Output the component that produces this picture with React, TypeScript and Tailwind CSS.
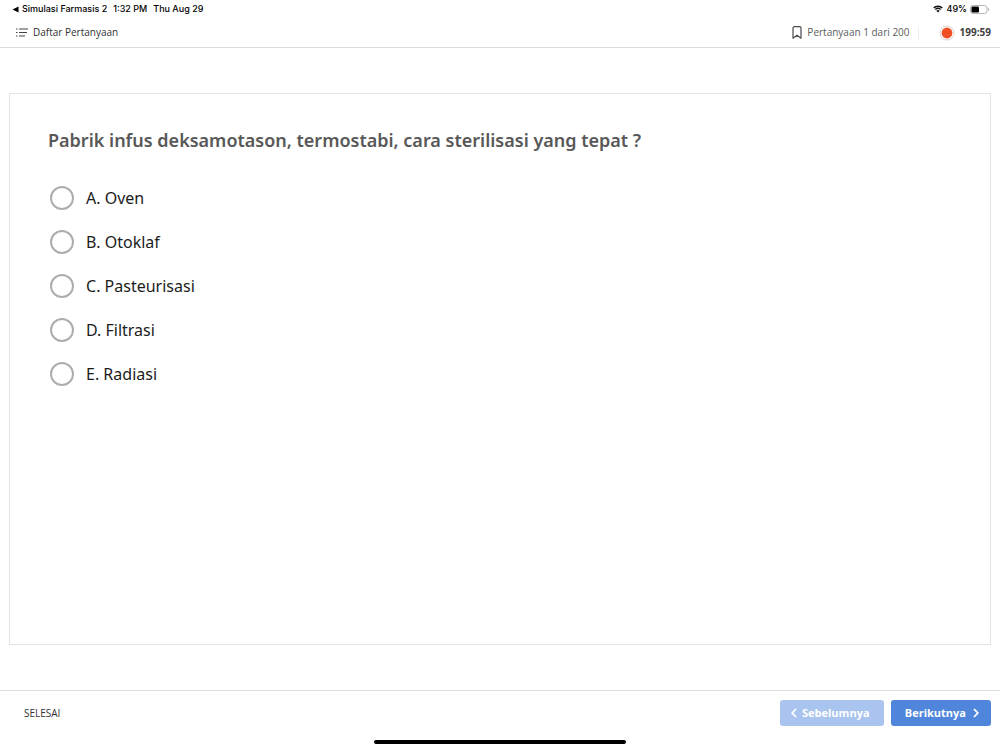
import { useState } from 'react';

const options = [
  { key: 'A', label: 'Oven' },
  { key: 'B', label: 'Otoklaf' },
  { key: 'C', label: 'Pasteurisasi' },
  { key: 'D', label: 'Filtrasi' },
  { key: 'E', label: 'Radiasi' },
];

function WifiIcon() {
  return (
    <svg viewBox="0 0 20 15" className="w-[10px] h-2" aria-hidden="true">
      <path
        d="M1.5 5.2a12.2 12.2 0 0 1 17 0M4.6 8.6a7.8 7.8 0 0 1 10.8 0"
        fill="none"
        stroke="#111"
        strokeWidth="3"
      />
      <path d="M10 14.5 6.6 11a4.8 4.8 0 0 1 6.8 0Z" fill="#111" />
    </svg>
  );
}

function BatteryIcon() {
  return (
    <svg viewBox="0 0 20 9" className="w-5 h-[9px]" aria-hidden="true">
      <rect x="0.5" y="0.5" width="16.5" height="8" rx="2.4" fill="none" stroke="#b5b5b5" />
      <rect x="1.5" y="1.5" width="7.5" height="6" rx="1.2" fill="#000" />
      <path d="M18.2 3v3c.8-.3 1-.9 1-1.5s-.2-1.2-1-1.5Z" fill="#a3a3a3" />
    </svg>
  );
}

function StatusBar() {
  return (
    <div className="flex h-[18px] items-center justify-between pl-3 pr-[10px] font-['Inter',sans-serif] text-[9px] font-medium text-black">
      <div className="flex items-center gap-1.5">
        <span className="flex items-center gap-[3px]">
          <svg viewBox="0 0 7 7" className="w-[7px] h-[7px]" aria-hidden="true">
            <path d="M0.5 3.5 6.5 0.6v5.8Z" fill="#000" />
          </svg>
          Simulasi Farmasis 2
        </span>
        <span>1:32 PM</span>
        <span>Thu Aug 29</span>
      </div>
      <div className="flex items-center gap-[3px]">
        <WifiIcon />
        <span>49%</span>
        <BatteryIcon />
      </div>
    </div>
  );
}

function Header() {
  return (
    <header className="flex h-[30px] items-center justify-between border-b border-[#dcdcdc] pl-4 pr-[9px] text-[10px] text-[#5c5c5c]">
      <button type="button" className="flex items-center gap-[5px] text-[#333]">
        <svg viewBox="0 0 12 9" className="w-3 h-[9px]" fill="#444" aria-hidden="true">
          <path d="M0 0.5h1.5v1H0zM0 4h1.5v1H0zM0 7.5h1.5v1H0zM3 0.4h9v1.2H3zM3 3.9h8v1.2H3zM3 7.4h6v1.2H3z" />
        </svg>
        Daftar Pertanyaan
      </button>
      <div className="flex items-center">
        <button type="button" aria-label="Tandai pertanyaan" className="mr-[5px]">
          <svg viewBox="0 0 10 13" className="w-[10px] h-[13px]" aria-hidden="true">
            <path
              d="M1 2.2C1 1.3 1.6.7 2.4.7h5.2c.8 0 1.4.6 1.4 1.5v10L5 9.2 1 12.2Z"
              fill="none"
              stroke="#4a4a4a"
              strokeWidth="1.2"
              strokeLinejoin="round"
            />
          </svg>
        </button>
        <span>Pertanyaan 1 dari 200</span>
        <span className="ml-2 mr-5 h-3 w-px bg-[#ececec]" />
        <svg viewBox="0 0 16 16" className="mr-[5px] w-4 h-4" aria-hidden="true">
          <circle cx="8" cy="8" r="7" fill="#fff" stroke="#ddc9c4" strokeWidth="0.9" />
          <circle cx="8" cy="8" r="5.4" fill="#f04e23" />
        </svg>
        <span className="font-bold text-[#3f3f3f]">199:59</span>
      </div>
    </header>
  );
}

export default function App() {
  const [answer, setAnswer] = useState('');

  return (
    <div className="flex min-h-screen flex-col bg-white font-['Open_Sans','Noto_Sans',sans-serif]">
      <StatusBar />
      <Header />

      <main className="mx-[9px] my-[45px] flex-1 border border-[#e3e3e3] px-[38px] pt-8 font-['Noto_Sans',sans-serif]">
        <h1 className="text-lg leading-7 font-semibold text-[#585858]">
          Pabrik infus deksamotason, termostabi, cara sterilisasi yang tepat ?
        </h1>
        <div role="radiogroup" aria-label="Pilihan jawaban" className="mt-[22px]">
          {options.map((option) => (
            <label key={option.key} className="flex h-11 items-center gap-3 pl-0.5 text-base text-[#1c1c1c]">
              <input
                type="radio"
                name="answer"
                value={option.key}
                checked={answer === option.key}
                onChange={() => setAnswer(option.key)}
                className="h-6 w-6 appearance-none rounded-full border-2 border-[#adadad] checked:border-[7px] checked:border-[#4f86dc]"
              />
              {option.key}. {option.label}
            </label>
          ))}
        </div>
      </main>

      <footer className="border-t border-[#dcdcdc]">
        <div className="flex items-center justify-between pt-[9px] pr-[9px] pl-6">
          <button type="button" className="text-[10px] text-[#333]">
            SELESAI
          </button>
          <div className="flex gap-[7px] text-[11px] font-bold text-white">
            <button
              type="button"
              disabled
              className="flex h-[26px] w-[104px] items-center gap-[5px] rounded-[3px] bg-[#a9c4ee] pl-[11px]"
            >
              <svg viewBox="0 0 6 10" className="w-[6px] h-[10px]" aria-hidden="true">
                <path d="M5 1 1.2 5 5 9" fill="none" stroke="#fff" strokeWidth="1.8" />
              </svg>
              Sebelumnya
            </button>
            <button
              type="button"
              className="flex h-[26px] w-[100px] items-center justify-end gap-[7px] rounded-[3px] bg-[#4f86dc] pr-3"
            >
              Berikutnya
              <svg viewBox="0 0 6 10" className="w-[6px] h-[10px]" aria-hidden="true">
                <path d="M1 1 4.8 5 1 9" fill="none" stroke="#fff" strokeWidth="1.8" />
              </svg>
            </button>
          </div>
        </div>
        <div className="mx-auto mt-[14px] mb-[6px] h-1 w-[252px] rounded-full bg-black" />
      </footer>
    </div>
  );
}
